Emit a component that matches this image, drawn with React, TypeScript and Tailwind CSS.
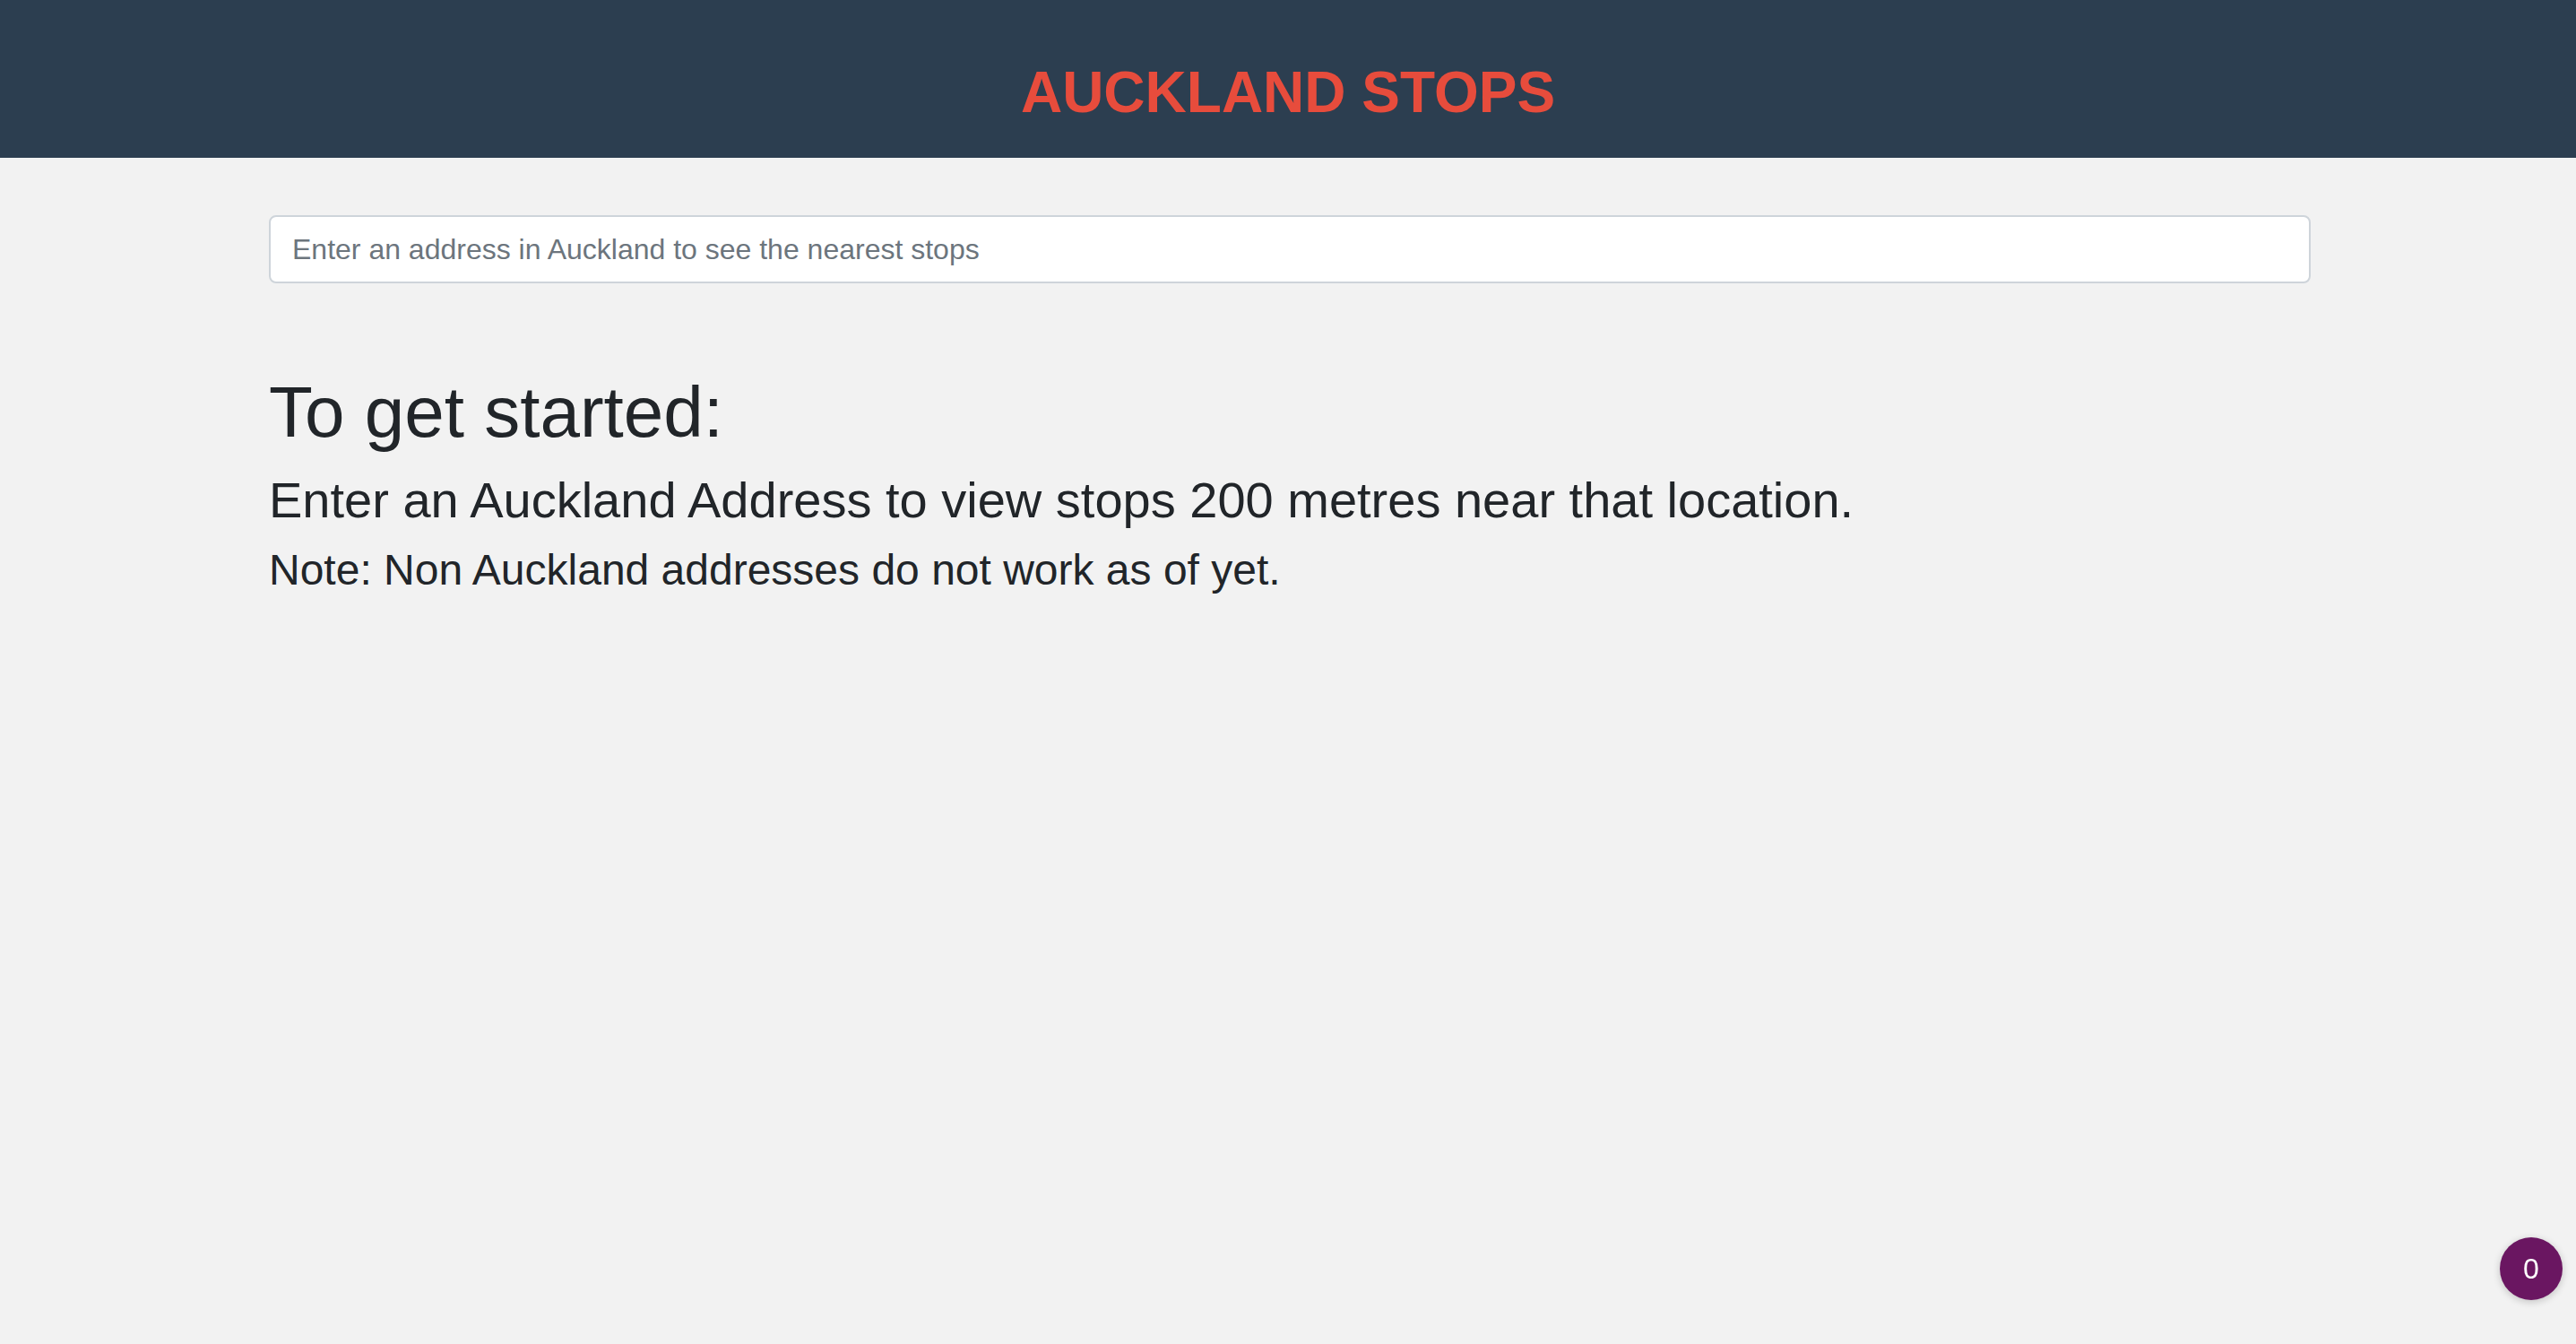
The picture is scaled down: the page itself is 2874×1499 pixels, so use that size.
import React, { useState } from "react"

export default function App() {
  const [address, setAddress] = useState("")

  return (
    <div
      className="min-h-screen bg-[#f2f2f2] text-[#212529]"
      style={{ fontFamily: '"Liberation Sans", Arial, sans-serif' }}
    >
      <header className="h-[176px] bg-[#2c3e50] pt-[65px]">
        <h1 className="text-center text-[64px] font-bold leading-[1.2] text-[#e74c3c]">
          AUCKLAND STOPS
        </h1>
      </header>

      <main className="ml-[300px] w-[2278px] pt-[64px]">
        <input
          type="text"
          value={address}
          onChange={(e) => setAddress(e.target.value)}
          placeholder="Enter an address in Auckland to see the nearest stops"
          className="block h-[76px] w-full rounded-[8px] border-2 border-[#ced4da] bg-white px-[24px] text-[32px] text-[#495057] outline-none placeholder:text-[#6c757d]"
        />

        <div className="mt-[96px]">
          <h1 className="mb-[16px] text-[80px] leading-[1.2]">To get started:</h1>
          <h3 className="mb-[16px] text-[56px] leading-[1.2]">
            Enter an Auckland Address to view stops 200 metres near that location.
          </h3>
          <h4 className="text-[48px] leading-[1.2]">
            Note: Non Auckland addresses do not work as of yet.
          </h4>
        </div>
      </main>

      <div className="fixed right-[15px] bottom-[49px] flex h-[70px] w-[70px] items-center justify-center rounded-full bg-[#6a1661] text-[32px] text-white shadow-[0_2px_8px_rgba(0,0,0,0.2)]">
        0
      </div>
    </div>
  )
}
